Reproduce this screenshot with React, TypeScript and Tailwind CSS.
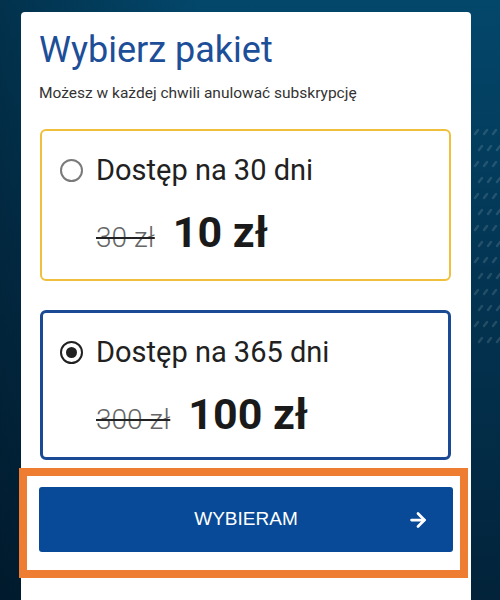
import React, { useState } from 'react';
import { ArrowRight } from 'lucide-react';

interface Plan {
  id: string;
  label: string;
  oldPrice: string;
  price: string;
}

const plans: Plan[] = [
  { id: '30', label: 'Dostęp na 30 dni', oldPrice: '30 zł', price: '10 zł' },
  { id: '365', label: 'Dostęp na 365 dni', oldPrice: '300 zł', price: '100 zł' },
];

function Radio({ checked }: { checked: boolean }) {
  return (
    <span
      className={
        checked
          ? 'flex w-[23px] h-[23px] shrink-0 items-center justify-center rounded-full border-[2.5px] border-[#212121]'
          : 'flex w-[23px] h-[23px] shrink-0 items-center justify-center rounded-full border-2 border-[#7a7a7a]'
      }
    >
      {checked && <span className="w-[11px] h-[11px] rounded-full bg-[#212121]" />}
    </span>
  );
}

function Dashes() {
  // faint pattern on the right edge of the background
  const marks = [];
  for (let r = 0; r < 14; r++) {
    for (let c = 0; c < 3; c++) {
      const x = 4 + c * 9 + (r % 2) * 4;
      const y = 10 + r * 16;
      marks.push(<line key={`${r}-${c}`} x1={x} y1={y + 4} x2={x + 3} y2={y} />);
    }
  }
  return (
    <svg width="29" height="240" className="absolute right-0 top-[120px]" stroke="rgba(255,255,255,0.13)" strokeWidth="2.5" strokeLinecap="round">
      {marks}
    </svg>
  );
}

export default function App() {
  const [selected, setSelected] = useState('365');

  return (
    <div className="relative w-[500px] h-[600px] overflow-hidden bg-[linear-gradient(180deg,#03476b_0%,#033553_45%,#02233a_100%)] font-['Roboto',sans-serif]">
      <div className="absolute inset-0 bg-[linear-gradient(90deg,rgba(0,10,20,0.35)_0%,rgba(0,0,0,0)_40%,rgba(0,0,0,0)_100%)]" />
      <Dashes />
      <div className="relative ml-[21px] mt-[12px] w-[450px] h-[588px] rounded-t-[4px] bg-white pl-[19px] pr-[20px] pt-[17px]">
        <h1 className="-ml-px text-[36px] leading-[42px] font-normal text-[#1d4e98]">Wybierz pakiet</h1>
        <p className="-ml-px mt-[12px] text-[15.5px] leading-[20px] text-[#333333]">
          Możesz w każdej chwili anulować subskrypcję
        </p>

        <div className="mt-[26px] flex flex-col gap-[29px]">
          {plans.map((plan) => {
            const active = selected === plan.id;
            return (
              <button
                key={plan.id}
                onClick={() => setSelected(plan.id)}
                className={
                  active
                    ? 'block text-left rounded-[6px] border-[3px] border-[#1a4a93] pl-[17px] pt-[22px] pb-[19px]'
                    : 'block text-left rounded-[6px] border-2 border-[#f0bf3c] pl-[18px] pt-[22px] pb-[23px]'
                }
              >
                <div className="flex items-center gap-[13px] h-[34px]">
                  <Radio checked={active} />
                  <span className="text-[29px] leading-[34px] text-[#212121]">{plan.label}</span>
                </div>
                <div className="mt-[21px] ml-[36px] flex items-baseline gap-[18px] h-[48px]">
                  <span className="text-[28px] leading-[48px] font-light text-[#666666] line-through decoration-[#222222] decoration-[2px]">
                    {plan.oldPrice}
                  </span>
                  <span className="text-[43px] leading-[48px] font-bold text-[#1a1a1a]">{plan.price}</span>
                </div>
              </button>
            );
          })}
        </div>

        <div className="mt-[8px] -ml-[21px] w-[449px] border-8 border-[#ee7d31] pl-[12px] pr-[7px] pt-[11px] pb-[18px]">
          <button className="relative flex w-full h-[65px] items-center justify-center rounded-[3px] bg-[#084a97] font-['Liberation_Sans',Arial,sans-serif] text-[19px] text-white">
            WYBIERAM
            <ArrowRight size={22} strokeWidth={3} className="absolute right-[24px] top-1/2 -translate-y-1/2" />
          </button>
        </div>
      </div>
    </div>
  );
}
